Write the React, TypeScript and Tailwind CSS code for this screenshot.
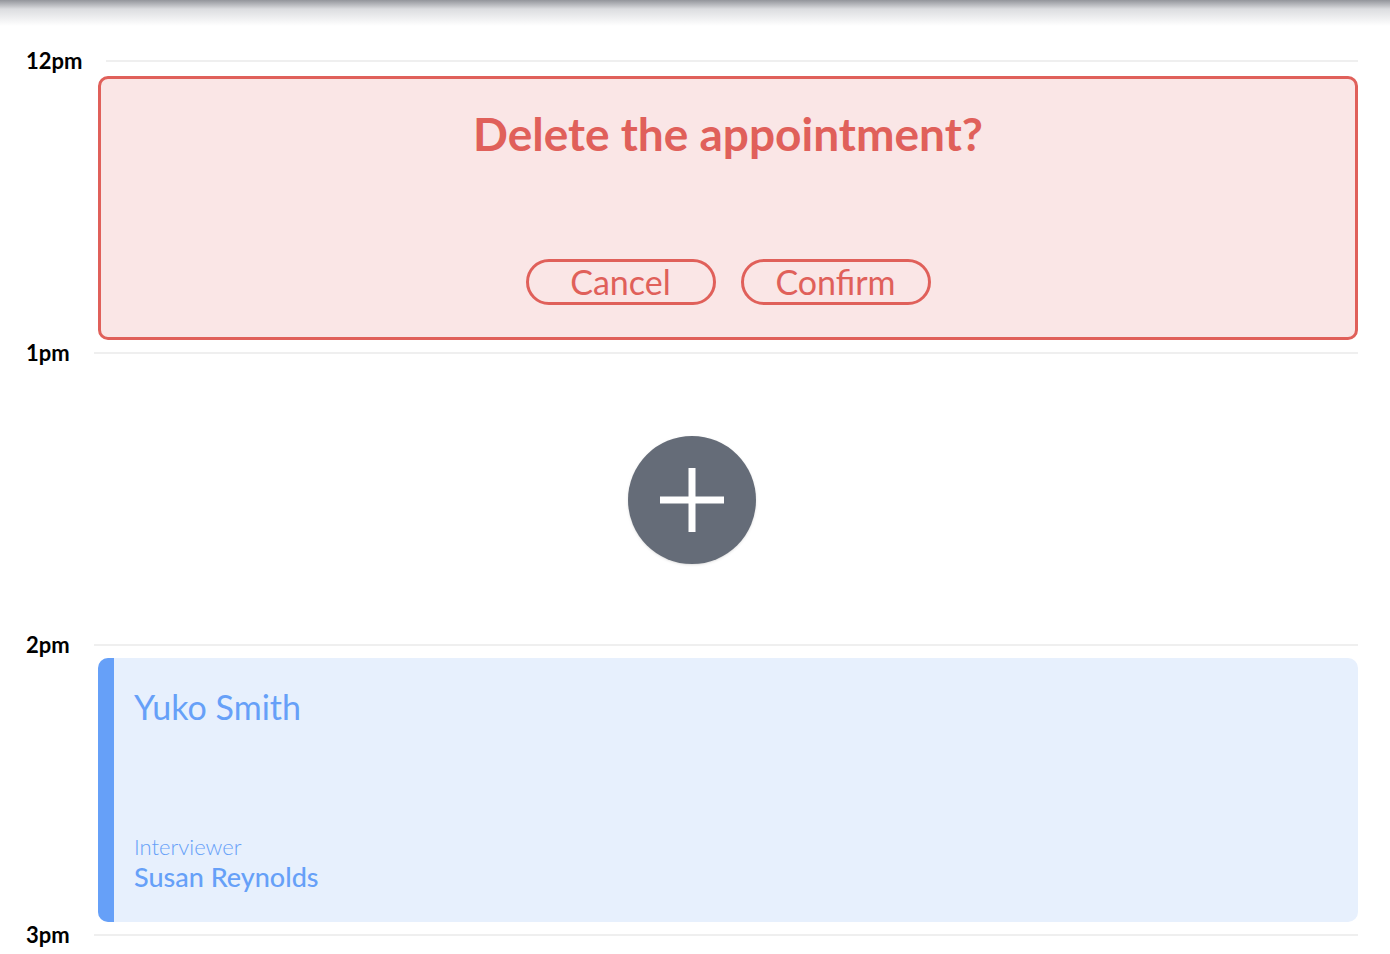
import { ReactNode } from 'react'

function Slot({ label, tall = true, children }: { label: string; tall?: boolean; children?: ReactNode }) {
  return (
    <div className={tall ? 'h-[292px] flex flex-col' : 'h-[290px] flex flex-col'}>
      <div className="flex items-center h-[2px]">
        <span className="text-[22px] font-bold text-black leading-none">{label}</span>
        <div className="flex-1 h-[2px] bg-[#efefef] ml-6" />
      </div>
      <div className={tall ? 'pt-[14px] pl-[72px]' : 'pt-[12px] pl-[72px]'}>{children}</div>
    </div>
  )
}

export default function App() {
  return (
    <div className="relative w-[1390px] h-[954px] overflow-hidden bg-white font-['Lato',sans-serif]">
      {/* top shadow */}
      <div className="h-[26px] bg-linear-to-b from-[#93959b] via-[#dcdde0] via-35% to-white" />

      <div className="pt-[34px] pl-[26px] pr-8">
        <Slot label="12pm">
          <div className="h-[264px] rounded-[10px] border-[3px] border-[#e0605a] bg-[#fae6e6] flex flex-col items-center pt-[32px]">
            <h2 className="text-[46px] font-bold text-[#e0605a] leading-none">Delete the appointment?</h2>
            <div className="mt-[102px] flex gap-[25px]">
              <button className="w-[190px] h-[46px] rounded-full border-[3px] border-[#e0605a] text-[#e0605a] text-[34px] leading-none">
                Cancel
              </button>
              <button className="w-[190px] h-[46px] rounded-full border-[3px] border-[#e0605a] text-[#e0605a] text-[34px] leading-none">
                Confirm
              </button>
            </div>
          </div>
        </Slot>
        <Slot label="1pm" />
        <Slot label="2pm" tall={false}>
          <div className="h-[264px] rounded-[10px] overflow-hidden bg-[#e7f0fd] flex">
            <div className="w-4 bg-[#66a0f8]" />
            <div className="flex-1 flex flex-col justify-between pl-5 pt-[32px] pb-[28px] text-[#66a0f8]">
              <div className="text-[34px] leading-none">Yuko Smith</div>
              <div className="flex flex-col">
                <span className="text-[22px] font-light leading-tight">Interviewer</span>
                <span className="text-[27px] font-medium leading-tight">Susan Reynolds</span>
              </div>
            </div>
          </div>
        </Slot>
        <Slot label="3pm" />
      </div>

      {/* floating add button */}
      <button className="absolute left-[628px] top-[436px] w-[128px] h-[128px] rounded-full bg-[#656c78] flex items-center justify-center shadow-sm">
        <svg width="64" height="64" viewBox="0 0 64 64">
          <path d="M32 0v64M0 32h64" stroke="white" strokeWidth="7" />
        </svg>
      </button>
    </div>
  )
}
